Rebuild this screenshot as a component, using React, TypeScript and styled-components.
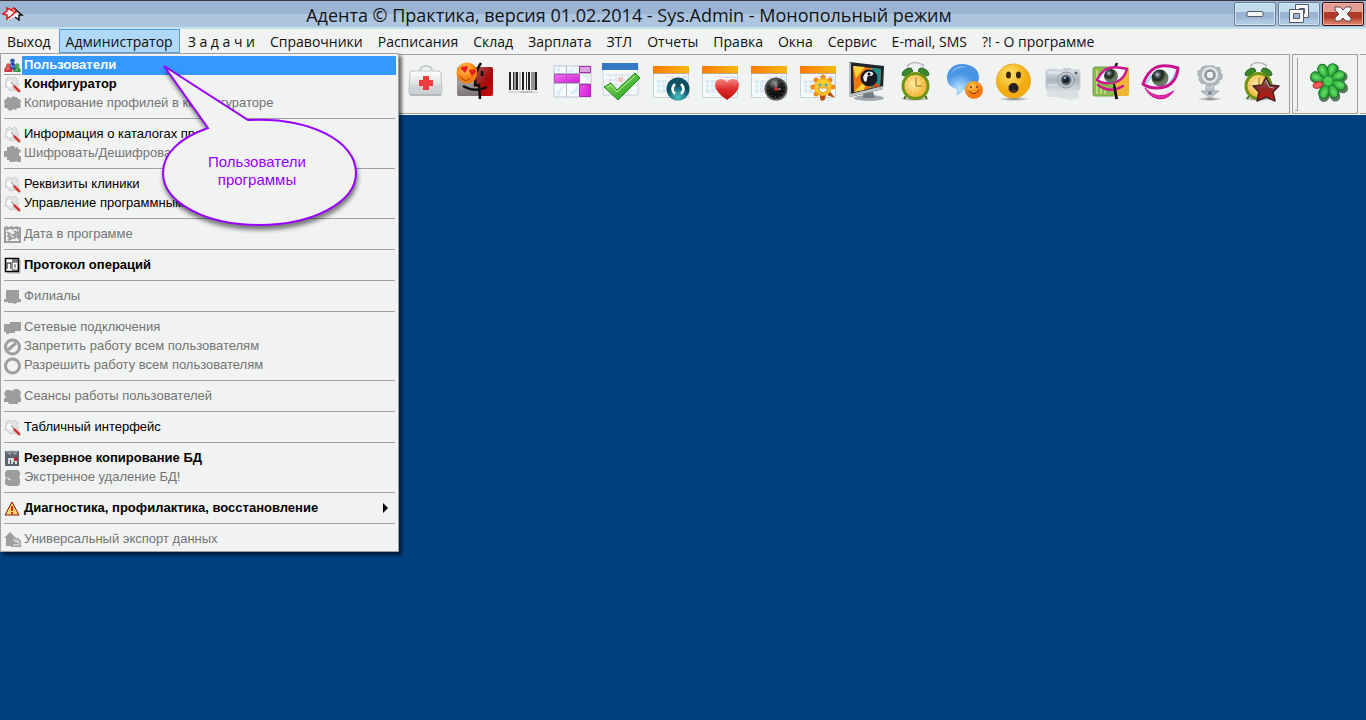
import React from "react";
import styled, { createGlobalStyle, css } from "styled-components";

const GlobalStyle = createGlobalStyle`
  *, *::before, *::after { box-sizing: border-box; }
  body { margin: 0; background: #004080; }
  button { font: inherit; color: inherit; margin: 0; padding: 0; border: 0; background: none; }
`;

const uiFont = `"Open Sans", "Noto Sans", sans-serif`;
const menuFont = `"Liberation Sans", Arial, sans-serif`;
const surface = "#f0f3f2";
const line = "#a0a0a0";

const Window = styled.div`
  display: flex;
  flex-direction: column;
  min-height: 100vh;
  overflow: hidden;
  background: #004080;
`;

const TitleBar = styled.header`
  display: flex;
  align-items: center;
  height: 29px;
  padding: 0 2px;
  border-top: 1px solid #38353a;
  border-bottom: 2px solid #c3e2ee;
  background: linear-gradient(#9bb4d3 50%, #adc5df 50%);
`;

const Title = styled.h1`
  flex: 1;
  margin: 0;
  padding-top: 1px;
  font: 400 18px/24px ${uiFont};
  text-align: center;
  color: #101418;
  white-space: nowrap;
`;

const WindowButtons = styled.div`
  display: flex;
  gap: 2px;
`;

const WindowButton = styled.button<{ $close?: boolean }>`
  display: grid;
  place-items: center;
  width: 42px;
  height: 24px;
  border: 1px solid ${(p) => (p.$close ? "#3c0c14" : "#6f7d98")};
  border-radius: 2px;
  box-shadow: inset 0 0 0 1px ${(p) => (p.$close ? "#f0b0a0" : "#cbe6f2")};
  background: ${(p) =>
    p.$close
      ? "linear-gradient(#e39d92 42%, #b03a2a 42%, #b03a2a 66%, #cf6a50 82%, #d98470)"
      : "linear-gradient(#c1ddeb 42%, #9bb4d3 42%, #9bb4d3 66%, #b0cae2 82%)"};
`;

const MenuBar = styled.nav`
  position: relative;
  z-index: 2;
  display: flex;
  gap: 1px;
  height: 25px;
  background: ${surface};
  font: 400 14px/24px ${uiFont};
  color: #111;
`;

const MenuButton = styled.button<{ $open?: boolean }>`
  height: 24px;
  padding: 2px 6px 0;
  border: 1px solid transparent;
  line-height: 20px;
  white-space: nowrap;
  ${(p) => p.$open && css`
    border-color: #569de5;
    background: #b0d8f8;
  `}
`;

const DropDown = styled.div`
  position: absolute;
  top: 24px;
  left: 0;
  width: 399px;
  padding: 2px 2px 2px 3px;
  border: 1px solid ${line};
  background: ${surface};
  box-shadow: 3px 3px 3px rgba(0, 0, 0, 0.55);
  font: 400 13px/19px ${menuFont};
`;

const MenuRow = styled.button<{ $bold?: boolean; $active?: boolean }>`
  display: flex;
  align-items: center;
  width: 100%;
  height: 19px;
  text-align: left;
  color: #000;
  font-weight: ${(p) => (p.$bold ? 700 : 400)};
  &:disabled { color: #747474; }
  ${(p) => p.$active && css`
    color: #fff;
    svg { border-bottom: 1px solid ${line}; }
  `}
`;

const RowLabel = styled.span<{ $active?: boolean }>`
  display: flex;
  flex: 1;
  align-items: center;
  justify-content: space-between;
  height: 19px;
  margin-left: 1px;
  padding: 0 8px 2px 2px;
  white-space: nowrap;
  background: ${(p) => (p.$active ? "#3399ff" : "transparent")};
`;

const Rule = styled.hr`
  height: 1px;
  margin: 5px 1px 6px 0;
  border: 0;
  background: ${line};
`;

const SubmenuArrow = styled.span`
  border: 5px solid transparent;
  border-left-color: #000;
  border-right-width: 0;
`;

const ToolBar = styled.div`
  display: flex;
  gap: 2px;
  height: 61px;
  border-bottom: 1px solid #fff;
  background: ${surface};
`;

const ToolGroup = styled.div<{ $grow?: boolean }>`
  display: flex;
  flex: ${(p) => (p.$grow ? 1 : "none")};
  align-items: center;
  justify-content: flex-end;
  gap: 6px;
  padding: ${(p) => (p.$grow ? "0 4px 5px" : "0 4px 5px 2px")};
  border: 1px solid ${line};
  border-left-width: ${(p) => (p.$grow ? 0 : 1)}px;
`;

const ToolButtons = styled.div`
  display: flex;
`;

const ToolButton = styled.button`
  display: grid;
  place-items: center;
  width: 49px;
  height: 49px;
  svg { overflow: visible; }
`;

const Grip = styled.span`
  align-self: stretch;
  width: 3px;
  margin: 3px 0 -3px;
  border-right: 1px solid ${line};
  border-bottom: 1px solid ${line};
`;

const ToolEnd = styled.div`
  width: 6px;
  border-top: 1px solid ${line};
  border-bottom: 1px solid ${line};
`;

const Desktop = styled.main`
  flex: 1;
  background: #004080;
`;

const Callout = styled.div`
  position: absolute;
  top: 10px;
  left: 157px;
  width: 204px;
  height: 172px;
  pointer-events: none;
  svg { position: absolute; inset: 0; overflow: visible; filter: drop-shadow(1px 4px 2px rgba(0, 0, 0, 0.5)); }
`;

const CalloutText = styled.p`
  position: relative;
  margin: 0;
  padding: 89px 6px 0 0;
  font: 400 15px/18px ${menuFont};
  text-align: center;
  color: #9900ff;
`;

type SmallIconName =
  | "users" | "tool" | "blob" | "gear" | "date" | "log" | "branch" | "network"
  | "deny" | "allow" | "sessions" | "backup" | "wipe" | "warning" | "export";

const gray = "#9d9d9d";

const smallIcons: Record<SmallIconName, React.ReactNode> = {
  users: (
    <>
      <path d="M4 10 7 6h3l4 5-2 4-4-2-3 1z" fill="#2748b8" />
      <circle cx="8.500" cy="4" r="2.500" fill="#3a58a8" />
      <path d="M0 16q-1-5 3-6l3 1 3 2-1 3z" fill="#d03540" />
      <circle cx="4" cy="9" r="2.500" fill="#d45a5a" />
      <path d="m9 16 2-5 3-1q4 2 3 6z" fill="#1f9a40" />
      <circle cx="13.500" cy="9" r="2.500" fill="#4ba85c" />
      <path d="m7 8 1 3 3-2" stroke="#8fb5f0" fill="none" />
      <path d="m2 13 3-1m7 3 2-3" stroke="#f5c8c8" fill="none" />
    </>
  ),
  tool: (
    <>
      <path d="m2 3 4-2 2 2 3-2 3 3-1 2 2 3-3 2-1 3-5 1-2-3-3-1 1-4z" fill="#e2e4e4" stroke="#bfc1c1" strokeDasharray="2 1" />
      <circle cx="6" cy="8" r="3" fill="#fff" />
      <path d="m7 6 3 4" stroke="#777" />
      <path d="m10 10 5 5" stroke="#f1b5ae" strokeWidth="4" />
      <path d="m10 10 6 6" stroke="#c72d27" strokeWidth="2" />
    </>
  ),
  blob: <path d="M1 4h2V2h2l2 1 2-2 2 1h2l1 2h2l1 3-1 2 1 2-1 2h-3l-1 2-3-1-2 2-2-1H4l-1-2H1L0 11l1-2-1-2z" fill={gray} />,
  gear: <path d="M3 2h2l2-1h3l1 2 3-1v2l3 1-1 3h-1v3h2v6h-4v-1l-3 1H6l-1-2H3v-3H0V6h3z" fill={gray} />,
  date: (
    <>
      <path d="M1 2h15v14H1z" fill="none" stroke={gray} strokeWidth="2" />
      <path d="m2 0 2 4m3-4 2 4m3-4 2 4M3 6l3 2-2 2 4 2-4 2m6-9 3 2-4 2 3 1-2 3m4-8v8m-9-1 3 1" fill="none" stroke={gray} strokeWidth="2" />
    </>
  ),
  log: (
    <>
      <path d="M3 16h13V3" stroke="#aaa" fill="none" />
      <path d="M1.500 1.500h13v13h-13z" fill="#fff" stroke="#000" strokeWidth="1.500" />
      <path d="M8 2h6v6H8zM8 8h6v6H8z" fill="#747474" />
      <path d="M3 12V6h4v6" fill="none" stroke="#555" strokeWidth="1.500" />
      <path d="M9.500 6.500h3v5h-3z" fill="none" stroke="#fff" strokeWidth="1.500" />
    </>
  ),
  branch: <path d="M2 2h13v9h2v3h-3l-3 2-3-1H4v-1H0v-3h2z" fill={gray} />,
  network: <path d="M0 5h6V3h11v9h-6v2H5v1H2v-2H0z" fill={gray} />,
  deny: (
    <>
      <circle cx="8.500" cy="9" r="7" fill="none" stroke={gray} strokeWidth="3" />
      <path d="m4 12 8-7" stroke={gray} strokeWidth="3" />
    </>
  ),
  allow: <circle cx="8.500" cy="9" r="7" fill="none" stroke={gray} strokeWidth="3" />,
  sessions: <path d="M2 2h4l2 1 3-2h3l3 3-1 4 1 2v4h-3v2H5l-1-2H0v-3l2-2-2-3z" fill={gray} />,
  backup: (
    <>
      <path d="M1 1h14v15H1z" fill="#5d646d" />
      <path d="M2 2h3v2h2V1h3v3h2V1h2" fill="none" stroke="#aeb5bd" />
      <path d="M4 8h9v6H4z" fill="#d9dadc" />
      <path d="M10 7h3v4h-3z" fill="#c52129" />
      <path d="M6 10h1v4H6zm3 2h2v2H9z" fill="#4d545d" />
    </>
  ),
  wipe: (
    <>
      <path d="M3 1h11l2 2v3l-1 2 1 2v5l-2 2H4l-3-2v-4l1-2-1-2V3z" fill={gray} />
      <path d="M4 8v2l3 1" fill="none" stroke={surface} />
    </>
  ),
  warning: (
    <>
      <path d="m8 2 7 13H1z" fill="#ffd96b" stroke="#8c1010" strokeLinejoin="round" />
      <path d="M8 6v5m0 1v2" stroke="#e22a10" strokeWidth="2" />
    </>
  ),
  export: (
    <>
      <path d="m6 1 6 6H9v8H2V7H0z" fill={gray} />
      <path d="M7 7h7l3 3v6H7z" fill={gray} />
      <path d="M9 9h4l2 2v3H9m2-3h3" fill="none" stroke={surface} />
    </>
  ),
};

type Entry =
  | "-"
  | { label: string; icon: SmallIconName; bold?: boolean; off?: boolean; active?: boolean; sub?: boolean };

const entries: Entry[] = [
  { label: "Пользователи", icon: "users", bold: true, active: true },
  { label: "Конфигуратор", icon: "tool", bold: true },
  { label: "Копирование профилей в конфигураторе", icon: "blob", off: true },
  "-",
  { label: "Информация о каталогах программы", icon: "tool" },
  { label: "Шифровать/Дешифровать", icon: "gear", off: true },
  "-",
  { label: "Реквизиты клиники", icon: "tool" },
  { label: "Управление программными", icon: "tool" },
  "-",
  { label: "Дата в программе", icon: "date", off: true },
  "-",
  { label: "Протокол операций", icon: "log", bold: true },
  "-",
  { label: "Филиалы", icon: "branch", off: true },
  "-",
  { label: "Сетевые подключения", icon: "network", off: true },
  { label: "Запретить работу всем пользователям", icon: "deny", off: true },
  { label: "Разрешить работу всем пользователям", icon: "allow", off: true },
  "-",
  { label: "Сеансы работы пользователей", icon: "sessions", off: true },
  "-",
  { label: "Табличный интерфейс", icon: "tool" },
  "-",
  { label: "Резервное копирование БД", icon: "backup", bold: true },
  { label: "Экстренное удаление БД!", icon: "wipe", off: true },
  "-",
  { label: "Диагностика, профилактика, восстановление", icon: "warning", bold: true, sub: true },
  "-",
  { label: "Универсальный экспорт данных", icon: "export", off: true },
];

const menus = [
  "Выход", "Администратор", "З а д а ч и", "Справочники", "Расписания", "Склад", "Зарплата", "ЗТЛ",
  "Отчеты", "Правка", "Окна", "Сервис", "E-mail, SMS", "?! - О программе",
];

const HiddenDefs = styled.svg`
  position: absolute;
`;

const Gradients = () => (
  <HiddenDefs width="0" height="0" aria-hidden="true">
    <defs>
      <linearGradient id="silver" x2="0" y2="1"><stop stopColor="#fff" /><stop offset="1" stopColor="#c5c8ca" /></linearGradient>
      <linearGradient id="steel" x2="0" y2="1"><stop stopColor="#dfe4e8" /><stop offset=".5" stopColor="#aab3bb" /><stop offset="1" stopColor="#d5dade" /></linearGradient>
      <linearGradient id="orangeBar"><stop stopColor="#ff7a00" /><stop offset="1" stopColor="#f3b80c" /></linearGradient>
      <linearGradient id="darkRed" x2="1" y2="1"><stop stopColor="#9b5b58" /><stop offset=".6" stopColor="#a80808" /><stop offset="1" stopColor="#d01010" /></linearGradient>
      <linearGradient id="greyFace" x2="0" y2="1"><stop stopColor="#94605a" /><stop offset=".5" stopColor="#a3a2a4" /><stop offset="1" stopColor="#7c7375" /></linearGradient>
      <linearGradient id="check" x2="1" y2="1"><stop stopColor="#9be76f" /><stop offset="1" stopColor="#12930f" /></linearGradient>
      <linearGradient id="pink" x2="1" y2="1"><stop stopColor="#f07af0" /><stop offset="1" stopColor="#d416d4" /></linearGradient>
      <linearGradient id="heart" x2="0" y2="1"><stop stopColor="#f5867f" /><stop offset=".5" stopColor="#dd2a2a" /><stop offset="1" stopColor="#c50d0d" /></linearGradient>
      <linearGradient id="star" x2="0" y2="1"><stop stopColor="#888" /><stop offset=".45" stopColor="#8a2a28" /><stop offset="1" stopColor="#d01208" /></linearGradient>
      <radialGradient id="yellow" cx=".4" cy=".3"><stop stopColor="#ffe36a" /><stop offset="1" stopColor="#f2ab10" /></radialGradient>
      <radialGradient id="orange" cx=".4" cy=".3"><stop stopColor="#ffc850" /><stop offset="1" stopColor="#f57a10" /></radialGradient>
      <radialGradient id="teal" cx=".5" cy=".85"><stop stopColor="#45c5c5" /><stop offset="1" stopColor="#0d4f63" /></radialGradient>
      <radialGradient id="black" cx=".4" cy=".2"><stop stopColor="#8d8d8d" /><stop offset=".6" stopColor="#252525" /><stop offset="1" stopColor="#111" /></radialGradient>
      <radialGradient id="bubble" cx=".4" cy=".8"><stop stopColor="#b9e4ff" /><stop offset="1" stopColor="#4a94e4" /></radialGradient>
      <radialGradient id="dial" cx=".4" cy=".4"><stop stopColor="#ffe9a0" /><stop offset="1" stopColor="#f6bd45" /></radialGradient>
      <radialGradient id="iris" cx=".35" cy=".3"><stop stopColor="#c3cfdb" /><stop offset=".3" stopColor="#4a5560" /><stop offset=".6" stopColor="#1c2620" /><stop offset=".85" stopColor="#3c5a2c" /><stop offset="1" stopColor="#6b776c" /></radialGradient>
      <radialGradient id="shade"><stop stopColor="#444" stopOpacity=".8" /><stop offset="1" stopColor="#777" stopOpacity="0" /></radialGradient>
      <radialGradient id="petal" cx=".45" cy=".3"><stop stopColor="#6be46a" /><stop offset="1" stopColor="#209d31" /></radialGradient>
    </defs>
  </HiddenDefs>
);

const CalendarBase = () => (
  <>
    <path d="M.5 4.500h35v31H.5z" fill="#f7fafb" stroke="#c4d6dc" />
    <path d="M0 4h36v7H0z" fill="url(#orangeBar)" />
    <path d="M0 11.500h36" stroke="#b7a69a" />
    <path d="M4 18h9v13H4z" fill="#d5eaf2" />
    <path d="M4 22h9m-9 4h9m-5-8v13" stroke="#fff" />
    <path d="M13 15h20m-20 4h16m-14 4h14m-10-9v12m6-12v10m6-10v8" stroke="#dccff0" strokeDasharray="2 1" />
    <path d="M30 15h4v9" fill="none" stroke="#bfe2ee" />
  </>
);

const AlarmBase = () => (
  <>
    <ellipse cx="17" cy="37" rx="16" ry="2" fill="url(#shade)" />
    <path d="M10 8V3q7-5 15 0v5" fill="none" stroke="#b4b8bd" strokeWidth="1.500" />
    <path d="M4 13q0-6 9-7l2 3-8 5zM31 13q0-6-9-7l-2 3 8 5z" fill="#39882b" stroke="#276326" />
    <path d="m8 34-2 3m21-3 2 3" stroke="#3c6b18" strokeWidth="2" />
    <circle cx="17.500" cy="24" r="12.500" fill="url(#dial)" stroke="#6d9413" strokeWidth="3" />
    <circle cx="17.500" cy="24" r="8.500" fill="none" stroke="#ce8b2a" strokeDasharray="1 3.450" />
    <path d="M18 16v8h6" fill="none" stroke="#9b7220" />
  </>
);

const toolIcons: { title: string; art: React.ReactNode }[] = [
  { title: "Медкарта", art: (
    <>
      <path d="M12 9q0-5 6-5t6 5" fill="none" stroke="#c6cbce" strokeWidth="2" />
      <path d="M2 11q0-2 3-2h25q3 0 3 2l1 19q0 3-2 3H3q-2 0-2-3z" fill="url(#silver)" stroke="#bec2c4" />
      <path d="M2 23h32v8q0 2-2 2H3q-2 0-2-3z" fill="#cfd2d4" opacity=".7" />
      <path d="M2 33h31" stroke="#999da0" />
      <path d="M15 14h6v4h4v6h-4v4h-6v-4h-4v-6h4z" fill="#ee3b3b" />
    </>
  ) },
  { title: "Пациенты", art: (
    <>
      <rect x="0" y="5" width="36" height="29" rx="2" fill="url(#greyFace)" />
      <path d="M22 5h12q2 0 2 2v25q0 2-2 2H22l-1-9h-4q0-10 5-20z" fill="url(#darkRed)" />
      <path d="M24 1q-6 8-6 22h4l1 14" fill="none" stroke="#111" strokeWidth="2.500" />
      <path d="M6 24q12 7 24 1" fill="none" stroke="#111" strokeWidth="2.500" />
      <path d="M25 9v5" stroke="#111" strokeWidth="2.500" />
      <circle cx="10" cy="11" r="10.500" fill="url(#orange)" />
      <path d="m8 11-4-4q0-4 3-2 3-3 4 1zM15 14l-3-5q1-3 3-1 3-2 4 2z" fill="#e71d20" />
      <path d="M3 14q4 7 10 3" fill="none" stroke="#a44d08" />
    </>
  ) },
  { title: "Штрих-код", art: (
    <>
      <path d="M2 29h30v2H2z" fill="#d6dade" />
      <path d="M4 10v18M11 10v18M17 10v18M23 10v18M30 10v18" stroke="#222" strokeWidth="2" />
      <path d="M7.500 10v18M9 10v18M20.500 10v18M26 10v18M28 10v18" stroke="#333" />
      <path d="M14 10v18" stroke="#888" />
      <path d="M15 30h11" stroke="#777" strokeDasharray="1 1" />
    </>
  ) },
  { title: "Сетка", art: (
    <>
      <path d="M-1 4h37v31H-1z" fill="#f7fbfe" stroke="#bdc3d3" />
      <path d="m0 8 5-3v5zm12 1 9-4-3 6zM1 31l8-8-5 11zm13 2 9-10v7z" fill="#d4edf8" />
      <path d="M11.500 4v31M24.500 4v31M-1 11.500h37M-1 21.500h37" stroke="#b4b7c8" />
      <path d="M24.500 4.500h11v6h-11zM24.500 22.500h11v12h-11z" fill="url(#pink)" stroke="#a82bac" />
      <path d="M-.5 12.500h12v8h-12zM11.500 12.500h13v8h-13z" fill="url(#pink)" stroke="#b44bbd" />
      <path d="M25 5h10v5H25z" fill="#d8a6dc" />
      <path d="M25.500 12.500h10v8z" fill="#e3eef3" />
    </>
  ) },
  { title: "Выполнено", art: (
    <>
      <path d="M-1 2h35v31H-1z" fill="#f6f8fa" stroke="#c6d2db" />
      <path d="M-2 1h36v7H-2z" fill="#3578c6" />
      <path d="M2 13h28M2 18h28M2 23h28M6 12v18M12 12v18M18 12v18M24 12v18" stroke="#d3dde4" />
      <path d="M14 15h5v5h-5z" fill="#f1c5c0" />
      <path d="m0 25 7-4 6 7L31 11l5 5-22 22z" fill="url(#check)" stroke="#168917" strokeLinejoin="round" />
      <path d="m3 25 4-2 6 7 18-16" fill="none" stroke="#b8f28b" />
    </>
  ) },
  { title: "Расписание врача", art: (
    <>
      <CalendarBase />
      <circle cx="25" cy="27" r="11.500" fill="url(#teal)" />
      <path d="M22 22q-5 5 0 10M28 22q5 5 0 10" fill="none" stroke="#fff" strokeWidth="2.500" />
    </>
  ) },
  { title: "Избранное", art: (
    <>
      <CalendarBase />
      <path d="M25 38Q13 30 13 23q0-6 6-6 4 0 6 3 2-3 6-3 6 0 6 6 0 7-12 15z" fill="url(#heart)" />
    </>
  ) },
  { title: "Время приема", art: (
    <>
      <CalendarBase />
      <circle cx="25" cy="27" r="10.500" fill="url(#black)" stroke="#565656" strokeWidth="2" />
      <circle cx="25" cy="27" r="8" fill="none" stroke="#888" strokeDasharray="1 3.190" />
      <path d="M25 20v7h5" fill="none" stroke="#bbb" />
      <path d="M23 27h4m-2-2v4" stroke="#e02020" strokeWidth="1.500" />
    </>
  ) },
  { title: "Отпуска", art: (
    <>
      <CalendarBase />
      <g fill="#f08b18">
        <circle cx="23" cy="15" r="2.500" /><circle cx="30" cy="18" r="2.500" /><circle cx="33" cy="25" r="2.500" />
        <circle cx="16" cy="18" r="2.500" /><circle cx="13" cy="25" r="2.500" /><circle cx="16" cy="32" r="2.500" />
      </g>
      <path d="m29 29 5 6-6-2zM20 32h6l-2 6h-3z" fill="#b94b0c" stroke="#b94b0c" strokeLinejoin="round" />
      <circle cx="23" cy="25" r="8.500" fill="#ffc92c" stroke="#f4a11c" />
      <circle cx="20" cy="23" r="1.500" fill="#4aa3d5" /><circle cx="26" cy="23" r="1.500" fill="#4aa3d5" />
      <path d="M18 26h10q-2 5-5 5t-5-5z" fill="#fff" stroke="#d28a14" />
    </>
  ) },
  { title: "Экран", art: (
    <>
      <ellipse cx="20" cy="36" rx="15" ry="3" fill="#a3a8ad" />
      <path d="m14 31 10-1 2 6H14z" fill="#747b82" />
      <path d="m0 0 35 4-1 23L1 35z" fill="#1e252c" />
      <path d="M0 0v35l2-2V1z" fill="#b6bcc2" />
      <path d="m4 4 28 3-1 17-26 6z" fill="#f3780c" />
      <path d="M4 4 16 5 7 16zM5 30l12-12-2 10z" fill="#ffd43b" />
      <path d="m23 6 9 1-1 17-9 2z" fill="#1f8f91" />
      <path d="m26 20 5 4-7 2z" fill="#e64511" />
      <circle cx="20" cy="16" r="8.500" fill="#171b21" />
      <path d="M14 15q3-7 9-5 3 2-1 4-4-1-4 3 0 4-3 2z" fill="#eee" />
      <circle cx="20" cy="12" r="1.500" fill="#111" />
      <path d="m1 32 33-8v3L1 35z" fill="#bec2c5" />
    </>
  ) },
  { title: "Будильник", art: <AlarmBase /> },
  { title: "Сообщения", art: (
    <>
      <path d="M15 2c9 0 17 5 17 13S24 29 16 28q-3 5-7 5 2-4 0-6-9-3-9-11C0 8 6 2 15 2z" fill="url(#bubble)" />
      <path d="M4 12Q9 2 20 5q-11 0-16 7z" fill="#abd4f8" opacity=".7" />
      <circle cx="27" cy="28" r="9" fill="url(#orange)" />
      <circle cx="24" cy="25" r="1" fill="#7b330b" /><circle cx="30" cy="25" r="1" fill="#7b330b" />
      <path d="M22 29q5 6 10-1" fill="none" stroke="#7b330b" />
    </>
  ) },
  { title: "Внимание", art: (
    <>
      <ellipse cx="18" cy="37" rx="16" ry="2" fill="url(#shade)" />
      <circle cx="17.500" cy="19" r="17" fill="url(#yellow)" stroke="#e5ab2a" />
      <ellipse cx="12.500" cy="13" rx="2.500" ry="3.500" fill="#3a250d" /><ellipse cx="22.500" cy="13" rx="2.500" ry="3.500" fill="#3a250d" />
      <circle cx="17.500" cy="26" r="5" fill="#291b1c" />
      <path d="M14 29q4-3 7 0-3 3-7 0z" fill="#48393a" />
    </>
  ) },
  { title: "Камера", art: (
    <>
      <path d="M2 29h32v7l-8 2-14-3H2z" fill="#ccd3d8" opacity=".6" />
      <path d="M4 7h8v3H4zM18 6h8v4h-8z" fill="#c8cfd5" />
      <rect x="1" y="8" width="34" height="20" rx="2" fill="url(#steel)" stroke="#c0c9d0" />
      <path d="M3 11h14M3 23h10" stroke="#edf1f5" />
      <circle cx="21" cy="18" r="8" fill="#c3c9cf" stroke="#8e989f" />
      <circle cx="21" cy="18" r="5.500" fill="#677783" />
      <circle cx="21" cy="18" r="3.500" fill="#1c2630" />
      <circle cx="20" cy="16" r="1" fill="#bad9f0" /><circle cx="31" cy="11" r="1.500" fill="#54616b" />
    </>
  ) },
  { title: "Снимок", art: (
    <>
      <rect x="-1" y="5" width="23" height="29" rx="2" fill="#8abb4c" stroke="#7d9a55" />
      <path d="M3 8v24m4-6v6m4-6v6" stroke="#bad97d" strokeWidth="2" />
      <path d="M20 5h13q2 0 2 2v25q0 2-2 2H20z" fill="#f0b538" />
      <path d="M23 1q-4 8-4 16m1 8 3 12" fill="none" stroke="#111" strokeWidth="2.500" />
      <path d="M3 18C8 8 14 2 33 7 30 18 23 21 15 21Q8 22 3 18Z" fill="#f6f2fb" stroke="#cc1691" strokeWidth="2.500" strokeLinejoin="round" />
      <circle cx="17" cy="14" r="7" fill="url(#iris)" />
      <path d="M4 23q12 9 25 1" fill="none" stroke="#cc1691" strokeWidth="2.500" strokeLinecap="round" />
      <path d="m20 22 1 4 1 11" fill="none" stroke="#111" strokeWidth="2" />
    </>
  ) },
  { title: "Просмотр", art: (
    <>
      <path d="M0 22C6 6 15 0 35 6 34 20 25 26 14 26Q5 26 0 22Z" fill="#f2f8ff" />
      <path d="M3 21Q6 19 8 13M27 20q4-4 6-11" stroke="#9bd3ef" strokeWidth="2" fill="none" />
      <circle cx="17" cy="16" r="8.500" fill="url(#iris)" />
      <path d="M0 22C6 6 15 0 35 6 34 20 25 26 14 26Q5 26 0 22Z" fill="none" stroke="#c8118d" strokeWidth="3" strokeLinejoin="round" />
      <path d="M2 26q12 14 29 3-9 12-21 6-5-3-8-9z" fill="#e02aa7" stroke="#c8118d" strokeLinejoin="round" />
    </>
  ) },
  { title: "Настройка", art: (
    <>
      <ellipse cx="18" cy="37" rx="13" ry="2" fill="url(#shade)" />
      <path d="M14 22h8v7h5l-9 7-9-7h5z" fill="url(#steel)" stroke="#a9aeb3" />
      <path d="M14 4h8l1 2 4-1 2 4-1 2 2 1v5l-3 1v3l-4 2-2-1-2 2h-3l-2-3-4 1-3-4 1-3-2-1V9l3-1 1-3z" fill="#b2b7bb" stroke="#a6adb2" />
      <circle cx="18" cy="13" r="7" fill="#9da4a9" stroke="#e8ebed" strokeWidth="2" />
      <circle cx="18" cy="13" r="4" fill={surface} stroke="#788087" />
      <circle cx="18" cy="31" r="2" fill="#7f878e" />
    </>
  ) },
  { title: "Напоминание", art: (
    <>
      <AlarmBase />
      <path d="m25 15 4 8 9 1-6 6 2 9-9-4-9 4 2-9-6-6 9-1z" fill="url(#star)" stroke="#452224" strokeWidth="1.500" strokeLinejoin="round" />
      <path d="m25 18 3 7 5 1" fill="none" stroke="#aaa" />
    </>
  ) },
];

const petals = [0, 45, 90, 135, 180, 270, 315];

const Flower = () => (
  <svg width="39" height="39" viewBox="0 0 39 39" aria-hidden="true">
    {petals.map((a) => (
      <path key={`s${a}`} d="M20 21Q12 9 16 3q4-4 8 0 4 6-4 18z" transform={`rotate(${a + 20} 20 21)`} fill="#244f2b" opacity=".75" />
    ))}
    {petals.map((a) => (
      <path key={a} d="M19 19Q12 8 15 3q4-4 8 0 3 5-4 16z" transform={`rotate(${a + 20} 19 19)`} fill="url(#petal)" stroke="#1c7b2b" />
    ))}
    <ellipse cx="9" cy="23" rx="5" ry="3" transform="rotate(-15 9 23)" fill="#f0605a" stroke="#ad2a27" />
    <circle cx="19" cy="19" r="5" fill="#4ace53" stroke="#208933" />
  </svg>
);

const AppLogo = () => (
  <svg width="22" height="14" viewBox="0 0 22 14" aria-hidden="true">
    <path d="m1 7 4-3V1l4 2 3-2 3 3 5 4h-3v5l-5-3-6 3V9z" fill="#f7f7f7" />
    <path d="m12 1 3 3 5 4h-3v5l-4-3" fill="none" stroke="#111" strokeWidth="1.500" />
    <path d="M12 5 9 3 5 1v3L1 7l4 1v4l4-3 3-3 2-1-2-4-3 2" fill="none" stroke="#ee1212" strokeWidth="1.500" />
  </svg>
);

const AdminMenu = () => (
  <DropDown role="menu" aria-label="Администратор">
    {entries.map((entry, i) =>
      entry === "-" ? (
        <Rule key={i} />
      ) : (
        <MenuRow key={i} role="menuitem" disabled={entry.off} $bold={entry.bold} $active={entry.active}>
          <svg width="17" height="18" viewBox="0 0 17 18" aria-hidden="true">{smallIcons[entry.icon]}</svg>
          <RowLabel $active={entry.active}>
            {entry.label}
            {entry.sub && <SubmenuArrow />}
          </RowLabel>
        </MenuRow>
      ),
    )}
    <Callout>
      <svg width="204" height="172" viewBox="0 0 204 172" aria-hidden="true">
        <path d="M50 64 6 2 90 56C152 53 198 77 198 109c0 29-43 52-97 52S5 138 5 109c0-19 16-35 45-45Z" fill={surface} stroke="#9900ff" strokeWidth="2" strokeLinejoin="miter" />
      </svg>
      <CalloutText>Пользователи<br />программы</CalloutText>
    </Callout>
  </DropDown>
);

export default function App() {
  return (
    <Window>
      <GlobalStyle />
      <Gradients />
      <TitleBar>
        <AppLogo />
        <Title>Адента © Практика, версия 01.02.2014 - Sys.Admin - Монопольный режим</Title>
        <WindowButtons>
          <WindowButton aria-label="Свернуть">
            <svg width="18" height="8" viewBox="0 0 18 8"><rect x="1" y="1.500" width="16" height="5" rx="1" fill="#f5f5f5" stroke="#555b66" /></svg>
          </WindowButton>
          <WindowButton aria-label="Восстановить">
            <svg width="22" height="20" viewBox="0 0 22 20">
              <path d="M7.500.5h13v13h-13z" fill="#f5f5f5" stroke="#555b66" />
              <path d="M11.500 4.500h5v5h-5z" fill="#9bb4d3" stroke="#555b66" />
              <path d="M1.500 5.500h14v13h-14z" fill="#f5f5f5" stroke="#555b66" />
              <path d="M5.500 9.500h6v5h-6z" fill="#9bb4d3" stroke="#555b66" />
            </svg>
          </WindowButton>
          <WindowButton aria-label="Закрыть" $close>
            <svg width="20" height="16" viewBox="0 0 20 16">
              <path d="M2 1h5l3 3 3-3h5v3l-4 4 4 4v3h-5l-3-3-3 3H2v-3l4-4-4-4z" fill="#f5f5f5" stroke="#5c4a50" strokeLinejoin="round" />
            </svg>
          </WindowButton>
        </WindowButtons>
      </TitleBar>
      <MenuBar>
        {menus.map((m) => (
          <MenuButton key={m} $open={m === "Администратор"}>{m}</MenuButton>
        ))}
        <AdminMenu />
      </MenuBar>
      <ToolBar>
        <ToolGroup $grow>
          <ToolButtons>
            {toolIcons.map((t) => (
              <ToolButton key={t.title} aria-label={t.title}>
                <svg width="39" height="39" viewBox="0 0 39 39" aria-hidden="true">{t.art}</svg>
              </ToolButton>
            ))}
          </ToolButtons>
        </ToolGroup>
        <ToolGroup>
          <Grip />
          <ToolButton aria-label="ICQ"><Flower /></ToolButton>
        </ToolGroup>
        <ToolEnd />
      </ToolBar>
      <Desktop />
    </Window>
  );
}
